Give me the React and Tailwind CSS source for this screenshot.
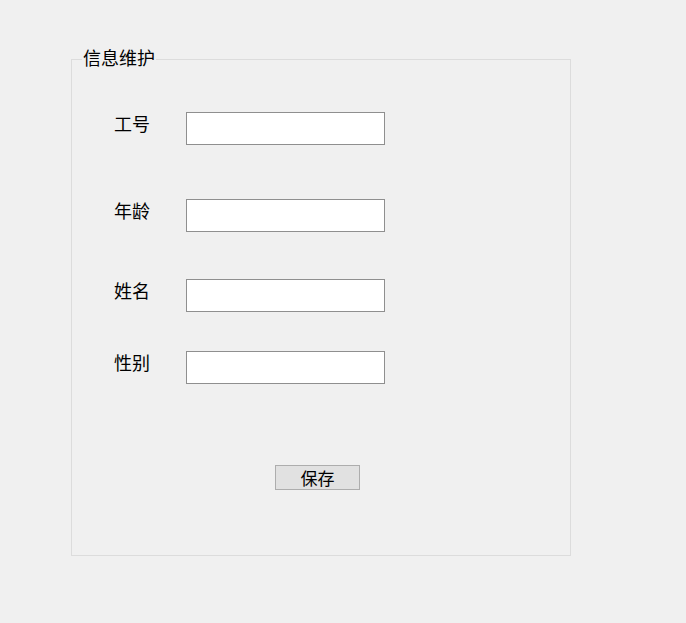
export default function App() {
    const font = { fontFamily: '"Noto Sans CJK SC", "Noto Sans", sans-serif' };
    const rows = [
        { label: "工号", mt: "mt-[40px]" },
        { label: "年龄", mt: "mt-[54px]" },
        { label: "姓名", mt: "mt-[47px]" },
        { label: "性别", mt: "mt-[39px]" },
    ];

    return (
        <div className="min-h-[623px] w-full bg-[#f0f0f0] pt-[46px] pl-[71px]" style={font}>
            <fieldset className="w-[500px] h-[510px] border border-[#dcdcdc] m-0 p-0">
                <legend className="ml-[10px] px-[1px] pb-[4px] text-[18px] leading-[22px] text-black">信息维护</legend>
                <div className="flex flex-col">
                    {rows.map((r) => (
                        <div key={r.label} className={`flex items-start ${r.mt}`}>
                            <span className="ml-[42px] w-[72px] text-[18px] leading-[22px] text-black">{r.label}</span>
                            <input
                                type="text"
                                className="w-[199px] h-[33px] bg-white border border-[#8f8f8f] outline-none"
                            />
                        </div>
                    ))}
                    <div className="flex mt-[81px]">
                        <button className="ml-[203px] w-[85px] h-[25px] bg-[#e1e1e1] border border-[#adadad] text-[17px] leading-[20px] text-black">
                            保存
                        </button>
                    </div>
                </div>
            </fieldset>
        </div>
    );
}
